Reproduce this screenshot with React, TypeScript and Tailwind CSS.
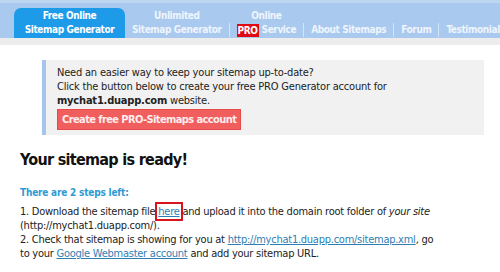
const font = { fontFamily: '"DejaVu Sans Condensed", "DejaVu Sans", Tahoma, sans-serif' };

const Sep = () => <div className="w-px h-[14px] mb-[1px] bg-[#d3e4f6] shrink-0" />;

const NavItem = ({ top, bottom }: { top?: React.ReactNode; bottom: React.ReactNode }) => (
  <div className="flex flex-col items-center px-[7px] text-[10px] font-bold leading-[14px] tracking-[-0.4px] text-[#eef5fd] whitespace-nowrap">
    <div className="h-[14px]">{top}</div>
    <div className="h-[15px]">{bottom}</div>
  </div>
);

export default function App() {
  return (
    <div className="relative w-[500px] h-[272px] overflow-hidden bg-white text-[#222]" style={font}>
      {/* top nav */}
      <div className="h-[38px] bg-[#a9c9ee] border-t-[3px] border-[#bcd5f1] flex items-end pl-[14px]">
        <div className="w-[111px] h-[30px] bg-[#1d9be9] rounded-t-[7px] pt-[1px] flex flex-col items-center text-[10px] font-bold leading-[14px] tracking-[-0.4px] text-white shrink-0">
          <div>Free Online</div>
          <div>Sitemap Generator</div>
        </div>
        <NavItem top="Unlimited" bottom="Sitemap Generator" />
        <Sep />
        <NavItem
          top="Online"
          bottom={
            <span className="flex items-center gap-[3px]">
              <span className="bg-[#e00a14] text-white px-[1px] leading-[13px]">PRO</span>
              Service
            </span>
          }
        />
        <Sep />
        <NavItem bottom="About Sitemaps" />
        <Sep />
        <NavItem bottom="Forum" />
        <Sep />
        <NavItem bottom="Testimonials" />
      </div>
      <div className="h-[7px] bg-[#ececec]" />

      {/* pro box */}
      <div className="ml-[42px] mt-[15px] w-[442px] bg-[#f1f1f1] border-l-[4px] border-[#a6c5ec] pl-[11px] pt-[6px] pb-[5px] text-[11px] leading-[14px] tracking-[-0.2px]">
        <div>Need an easier way to keep your sitemap up-to-date?</div>
        <div>Click the button below to create your free PRO Generator account for</div>
        <div>
          <b>mychat1.duapp.com</b> website.
        </div>
        <button className="mt-[1px] h-[21px] px-[4px] bg-[#f05e5e] border border-[#e84a4a] text-[#ffecec] font-bold text-[11px] leading-[19px] tracking-[-0.6px]">
          Create free PRO-Sitemaps account
        </button>
      </div>

      {/* main */}
      <div className="pl-[20px] pt-[14px]">
        <h1 className="text-[16px] font-bold leading-[22px] tracking-[-0.7px] text-[#111]">Your sitemap is ready!</h1>
        <div className="mt-[15px] text-[10px] font-bold leading-[14px] tracking-[-0.2px] text-[#2e9ad3]">There are 2 steps left:</div>
        <div className="mt-[5px] text-[11px] leading-[14px] tracking-[-0.25px] pr-[20px]">
          <div>
            1. Download the sitemap file{' '}
            <span className="outline-2 outline-[#d8141c] outline-offset-[1px]">
              <a className="text-[#2f7eb3] underline">here</a>
            </span>{' '}
            and upload it into the domain root folder of <i>your site</i>
          </div>
          <div>(http://mychat1.duapp.com/).</div>
          <div>
            2. Check that sitemap is showing for you at{' '}
            <a className="text-[#2f7eb3] underline">http://mychat1.duapp.com/sitemap.xml</a>, go
          </div>
          <div>
            to your <a className="text-[#2f7eb3] underline">Google Webmaster account</a> and add your sitemap URL.
          </div>
        </div>
      </div>
    </div>
  );
}
